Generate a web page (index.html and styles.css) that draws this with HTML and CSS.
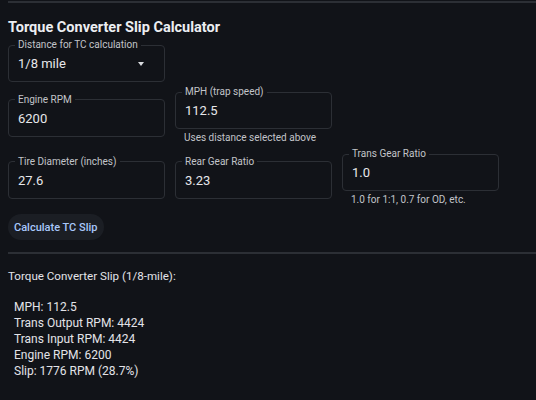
FILE: index.html
```html
<!DOCTYPE html>
<html>
<head>
<meta charset="utf-8">
<link rel="stylesheet" href="styles.css">
</head>
<body>
<div class="page">
  <hr class="divider top">
  <h2 class="title">Torque Converter Slip Calculator</h2>
  <div class="row r1">
    <fieldset class="field">
      <legend>Distance for TC calculation</legend>
      <div class="value select"><span>1/8 mile</span><span class="caret"></span></div>
    </fieldset>
  </div>
  <div class="row r2">
    <fieldset class="field">
      <legend>Engine RPM</legend>
      <div class="value">6200</div>
    </fieldset>
    <div class="group">
      <fieldset class="field">
        <legend>MPH (trap speed)</legend>
        <div class="value">112.5</div>
      </fieldset>
      <div class="helper">Uses distance selected above</div>
    </div>
  </div>
  <div class="row r3">
    <fieldset class="field">
      <legend>Tire Diameter (inches)</legend>
      <div class="value">27.6</div>
    </fieldset>
    <fieldset class="field">
      <legend>Rear Gear Ratio</legend>
      <div class="value">3.23</div>
    </fieldset>
    <div class="group">
      <fieldset class="field">
        <legend>Trans Gear Ratio</legend>
        <div class="value">1.0</div>
      </fieldset>
      <div class="helper">1.0 for 1:1, 0.7 for OD, etc.</div>
    </div>
  </div>
  <button class="btn">Calculate TC Slip</button>
  <hr class="divider mid">
  <div class="result-title">Torque Converter Slip (1/8-mile):</div>
  <div class="result">
    <div>MPH: 112.5</div>
    <div>Trans Output RPM: 4424</div>
    <div>Trans Input RPM: 4424</div>
    <div>Engine RPM: 6200</div>
    <div>Slip: 1776 RPM (28.7%)</div>
  </div>
</div>
</body>
</html>
```
FILE: styles.css
```css
html, body {
  margin: 0;
  padding: 0;
  background: #111318;
  color: #e3e3e8;
  font-family: Roboto, "Noto Sans", sans-serif;
}
.page {
  padding: 1px 0 0 8px;
}
.divider {
  border: 0;
  height: 2px;
  background: #2c2f35;
  margin: 0;
}
.title {
  font-size: 14.5px;
  font-weight: 700;
  line-height: 20px;
  margin: 15px 0 0 0;
  color: #eceef2;
}
.row {
  display: flex;
  align-items: center;
  gap: 10px;
}
.r1 { margin-top: 7px; }
.r2 { margin-top: 10px; }
.r3 { margin-top: 10px; }
.field {
  box-sizing: border-box;
  width: 157px;
  margin: -6px 0 0 0;
  padding: 0 6px 7px 6px;
  border: 1px solid #2c2f35;
  border-radius: 4px;
  min-width: 0;
}
.field legend {
  font-size: 10px;
  line-height: 12px;
  padding: 0 3px;
  color: #c2c4c9;
}
.value {
  font-size: 13px;
  line-height: 20px;
  margin-top: 3px;
  padding: 0 3px;
  color: #e6e7ea;
}
.select {
  display: flex;
  justify-content: space-between;
  align-items: center;
}
.caret {
  width: 0;
  height: 0;
  border-left: 3.5px solid transparent;
  border-right: 3.5px solid transparent;
  border-top: 4px solid #d8dade;
  margin-right: 11px;
}
.group {
  display: flex;
  flex-direction: column;
}
.helper {
  font-size: 10px;
  line-height: 12px;
  margin: 3px 0 0 9px;
  color: #c2c4c9;
}
.btn {
  display: block;
  margin-top: 8px;
  height: 26px;
  padding: 0 7px 0 6px;
  border: 0;
  border-radius: 13px;
  background: #1b1e24;
  color: #a8c7fa;
  font-family: Roboto, "Noto Sans", sans-serif;
  font-size: 11px;
  font-weight: 500;
}
.mid {
  margin-top: 12px;
}
.result-title {
  font-size: 11.6px;
  line-height: 16px;
  margin-top: 14px;
  color: #e3e3e8;
}
.result {
  margin: 15px 0 0 6px;
  font-size: 12px;
  line-height: 16px;
  color: #e3e3e8;
}
```
